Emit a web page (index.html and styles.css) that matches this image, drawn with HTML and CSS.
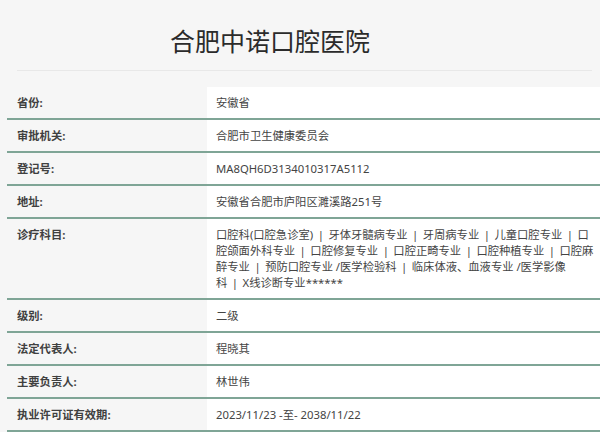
FILE: index.html
```html
<!DOCTYPE html>
<html lang="zh-CN">
<head>
    <meta charset="UTF-8">
    <meta name="viewport" content="width=device-width, initial-scale=1.0">
    <title>合肥中诺口腔医院</title>
    <link rel="stylesheet" href="styles.css">
</head>
<body>

    <div class="page">
        <h1 class="title">合肥中诺口腔医院</h1>

        <div class="info-table">
            <div class="row">
                <div class="label">省份:</div>
                <div class="value">安徽省</div>
            </div>
            <div class="row">
                <div class="label">审批机关:</div>
                <div class="value">合肥市卫生健康委员会</div>
            </div>
            <div class="row">
                <div class="label">登记号:</div>
                <div class="value">MA8QH6D3134010317A5112</div>
            </div>
            <div class="row">
                <div class="label">地址:</div>
                <div class="value">安徽省合肥市庐阳区濉溪路251号</div>
            </div>
            <div class="row">
                <div class="label">诊疗科目:</div>
                <div class="value">
                    <span class="line">口腔科(口腔急诊室)<span class="sep">|</span>牙体牙髓病专业<span class="sep">|</span>牙周病专业<span class="sep">|</span>儿童口腔专业<span class="sep">|</span>口</span>
                    <span class="line">腔颌面外科专业<span class="sep">|</span>口腔修复专业<span class="sep">|</span>口腔正畸专业<span class="sep">|</span>口腔种植专业<span class="sep">|</span>口腔麻</span>
                    <span class="line">醉专业<span class="sep">|</span>预防口腔专业 /医学检验科<span class="sep">|</span>临床体液、血液专业 /医学影像</span>
                    <span class="line">科<span class="sep">|</span>X线诊断专业******</span>
                </div>
            </div>
            <div class="row">
                <div class="label">级别:</div>
                <div class="value">二级</div>
            </div>
            <div class="row">
                <div class="label">法定代表人:</div>
                <div class="value">程晓其</div>
            </div>
            <div class="row">
                <div class="label">主要负责人:</div>
                <div class="value">林世伟</div>
            </div>
            <div class="row">
                <div class="label">执业许可证有效期:</div>
                <div class="value">2023/11/23 -至- 2038/11/22</div>
            </div>
        </div>
    </div>

</body>
</html>
```

FILE: styles.css
```css
body {
    margin: 0;
    background-color: #f6f6f6;
    font-family: "Noto Sans", "Noto Sans CJK SC", sans-serif;
    color: #333;
}

.page {
    width: 600px;
}

.title {
    width: 506px;
    margin: 0 8px 0 17px;
    padding: 22px 69px 10px 0;
    font-size: 25px;
    font-weight: normal;
    line-height: 38px;
    text-align: center;
    color: #2b2b2b;
    border-bottom: 1px solid #e8e8e8;
}

.info-table {
    margin: 16px 0 0 7px;
}

.row {
    display: grid;
    grid-template-columns: 200px 1fr;
    border-bottom: 2px solid #7fa596;
    font-size: 11.3px;
    line-height: 16px;
}

.label {
    padding: 8px 0 7px 10px;
    font-weight: bold;
    color: #404040;
}

.value {
    padding: 8px 0 7px 9px;
    background-color: #fff;
    color: #444;
}

.line {
    display: block;
    white-space: nowrap;
}

.sep {
    padding: 0 4.5px;
}
```
